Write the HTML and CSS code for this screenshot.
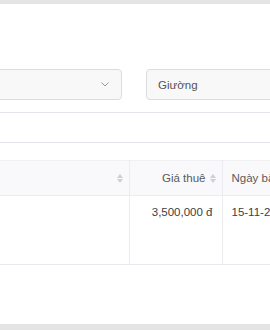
FILE: index.html
```html
<!DOCTYPE html>
<html lang="vi">
<head>
    <meta charset="UTF-8">
    <meta name="viewport" content="width=device-width, initial-scale=1.0">
    <title>Danh sách phòng</title>
    <link rel="stylesheet" href="styles.css">
</head>
<body>
    <div class="topbar"></div>

    <div class="page">
        <div class="filters">
            <div class="select">
                <span class="select-value"></span>
                <svg class="chevron" width="8" height="5" viewBox="0 0 8 5">
                    <path d="M0.5 0.5 L4 4 L7.5 0.5" fill="none" stroke="#9a9a9a" stroke-width="1"/>
                </svg>
            </div>
            <div class="select select-input">Giường</div>
        </div>

        <div class="toolbar"></div>

        <table class="table">
            <thead>
                <tr>
                    <th class="col-name">
                        <div class="th-inner">
                            <span></span>
                            <span class="sorter"><i class="up"></i><i class="down"></i></span>
                        </div>
                    </th>
                    <th class="col-price">
                        <div class="th-inner">
                            <span>Giá thuê</span>
                            <span class="sorter"><i class="up"></i><i class="down"></i></span>
                        </div>
                    </th>
                    <th class="col-date">Ngày bắt đầu</th>
                </tr>
            </thead>
            <tbody>
                <tr>
                    <td class="col-name"></td>
                    <td class="col-price num">3,500,000 đ</td>
                    <td class="col-date">15-11-2023</td>
                </tr>
            </tbody>
        </table>
    </div>

    <div class="bottombar"></div>
</body>
</html>
```

FILE: styles.css
```css
body {
    margin: 0;
    font-family: "Liberation Sans", Arial, sans-serif;
    font-size: 11.5px;
    color: #444;
    background-color: #fff;
    height: 330px;
    overflow: hidden;
    position: relative;
}

.topbar {
    height: 4px;
    background-color: #e4e4e4;
}

.bottombar {
    position: absolute;
    left: 0;
    right: 0;
    bottom: 0;
    height: 6px;
    background-color: #e4e4e4;
}

.page {
    margin-left: -150px;
    width: 600px;
    padding-top: 65px;
}

.filters {
    display: flex;
    gap: 24px;
}

.select {
    box-sizing: border-box;
    height: 31px;
    border: 1px solid #dcdce0;
    border-radius: 4px;
    background-color: #f8f8f9;
    display: flex;
    align-items: center;
    padding: 0 11px;
    color: #555;
}

.select:first-child {
    width: 272px;
    justify-content: space-between;
}

.select-input {
    width: 200px;
}

.chevron {
    margin-right: 1px;
}

.toolbar {
    box-sizing: border-box;
    height: 31px;
    margin-top: 12px;
    border-top: 1px solid #e4e4ec;
    border-bottom: 1px solid #e4e4ec;
}

.table {
    margin-top: 17px;
    border-collapse: collapse;
    table-layout: fixed;
}

.table th,
.table td {
    padding: 0 9px;
    border-right: 1px solid #ececf0;
}

.table th {
    height: 35px;
    box-sizing: border-box;
    background-color: #f9f9fb;
    border-top: 1px solid #f0f0f3;
    border-bottom: 1px solid #ececf0;
    font-weight: normal;
    color: #5a5a5a;
    text-align: left;
    white-space: nowrap;
    overflow: hidden;
}

.table td {
    height: 69px;
    vertical-align: top;
    padding-top: 10px;
    box-sizing: border-box;
    border-bottom: 1px solid #e8e8ee;
    white-space: nowrap;
    overflow: hidden;
    color: #404040;
}

.col-name { width: 279px; }
.col-price { width: 93px; }
.col-date { width: 120px; }

.table th.col-name,
.table th.col-price {
    padding-right: 5px;
}

.th-inner {
    display: flex;
    justify-content: flex-end;
    align-items: center;
    gap: 4px;
}

.num {
    text-align: right;
}

.sorter {
    display: flex;
    flex-direction: column;
    gap: 1px;
    width: 7px;
    align-items: center;
}

.sorter i {
    width: 0;
    height: 0;
    border-left: 3.5px solid transparent;
    border-right: 3.5px solid transparent;
}

.sorter .up {
    border-bottom: 4px solid #d0d0d4;
}

.sorter .down {
    border-top: 4px solid #d0d0d4;
}
```
